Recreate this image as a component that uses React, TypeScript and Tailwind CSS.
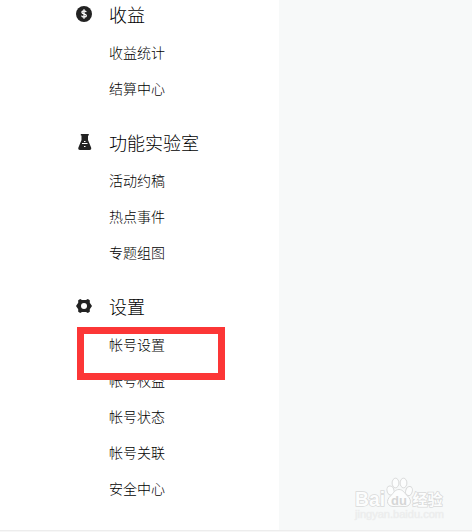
import React from 'react';

interface MenuSection {
  title: string;
  icon: React.ReactNode;
  items: string[];
}

const ACTIVE_ITEM = '帐号设置';

function IncomeIcon() {
  return (
    <svg className="w-4 h-4" viewBox="0 0 16 16" fill="none">
      <circle cx="8" cy="8" r="8" fill="#222" />
      <path
        d="M10.2 6.1C10 5.2 9.2 4.8 8 4.8S5.9 5.3 5.9 6.3c0 2.2 4.4 1.1 4.4 3.3 0 1-.9 1.6-2.3 1.6s-2.2-.6-2.4-1.6M8 3.2v9.6"
        stroke="#fff"
        strokeWidth="1.3"
      />
    </svg>
  );
}

function LabIcon() {
  return (
    <svg className="w-4 h-4" viewBox="0 0 16 16">
      <path
        d="M4.8 0h8v1.5h-.8V6l3 7.2c.7 1.5 0 2.8-1.5 2.8H4c-1.5 0-2.2-1.3-1.5-2.8L5.500 6V1.500h-.7z"
        fill="#222"
      />
      <path d="M6 9.5h5.5M8 7.5h1.5M8 12.5h1.5" stroke="#fff" strokeWidth="1" />
    </svg>
  );
}

function SettingsIcon() {
  return (
    <svg className="w-4 h-4" viewBox="0 0 16 16">
      <path
        d="M4.2 1 6 2h4l1.8-1 2 1.2v2.6L16 8l-2.2 3.2v2.6l-2 1.2L10 14H6l-1.8 1-2-1.2v-2.6L0 8l2.2-3.2V2.2z"
        fill="#222"
      />
      <circle cx="8" cy="8" r="3" fill="#fff" />
    </svg>
  );
}

const sections: MenuSection[] = [
  { title: '收益', icon: <IncomeIcon />, items: ['收益统计', '结算中心'] },
  { title: '功能实验室', icon: <LabIcon />, items: ['活动约稿', '热点事件', '专题组图'] },
  {
    title: '设置',
    icon: <SettingsIcon />,
    items: ['帐号设置', '帐号权益', '帐号状态', '帐号关联', '安全中心'],
  },
];

function Watermark() {
  return (
    <svg
      className="absolute left-[350px] top-[474px] w-[100px] h-[50px] font-['Liberation_Sans','Noto_Sans_CJK_SC',sans-serif]"
      viewBox="0 0 100 50"
      fill="#fcfdfd"
      stroke="#d9dada"
      strokeWidth="1"
    >
      <g paintOrder="stroke" strokeWidth="1.5">
        <text x="5" y="32" fontSize="19.5" fontWeight="700" textLength="30" lengthAdjust="spacingAndGlyphs">Bai</text>
        <text x="62.5" y="31" fontSize="15" fontWeight="700" textLength="30">经验</text>
      </g>
      <ellipse cx="40.5" cy="16.5" rx="3.5" ry="4.6" transform="rotate(-15 40.5 16.5)" />
      <ellipse cx="45.5" cy="9" rx="3.4" ry="4.8" />
      <ellipse cx="53.5" cy="9" rx="3.4" ry="4.8" />
      <ellipse cx="59" cy="17" rx="3.3" ry="4.6" transform="rotate(15 59 17)" />
      <path d="M49 15.5c4 0 5.5 3.5 8 6 6.5 5.5 3 11.5-3 11-3-.3-7-.3-10 0-6 .5-9.5-5.5-3-11 2.5-2.500 4-6 8-6z" />
      <text x="41" y="31" fontSize="13" fontWeight="700" textLength="16" fill="#d5d6d6" stroke="none">du</text>
      <text
        x="5"
        y="43.5"
        fontSize="11"
        textLength="89"
        lengthAdjust="spacingAndGlyphs"
        fill="#e9eaea"
        stroke="#eeefef"
        strokeWidth=".5"
      >
        jingyan.baidu.com
      </text>
    </svg>
  );
}

export default function App() {
  return (
    <div className="relative w-[472px] h-[532px] overflow-hidden flex flex-col bg-[#f7f9f9] text-black font-['Noto_Sans_CJK_SC',sans-serif]">
      <div className="flex-1 min-h-0 flex">
        <nav className="w-[279px] bg-white pl-[76px] overflow-hidden">
          <div className="-mt-[21px]">
            {sections.map((section) => (
              <section key={section.title} className="pt-4">
                <h2 className="h-10 flex items-center text-lg font-light">
                  <span className="w-[33px] -mt-0.5">{section.icon}</span>
                  <span className="pb-0.5">{section.title}</span>
                </h2>
                <ul className="pl-[33px] text-sm font-light">
                  {section.items.map((item) => (
                    <li key={item} className="relative h-9 pb-0.5 flex items-center">
                      {item}
                      {item === ACTIVE_ITEM && (
                        <span className="absolute z-10 -left-8 top-0 w-[148px] h-[53px] border-[7px] border-[#fc3636]" />
                      )}
                    </li>
                  ))}
                </ul>
              </section>
            ))}
          </div>
        </nav>
      </div>
      <div className="h-0.5 shrink-0 bg-[#f7f7f7] border-t border-[#ededed]" />
      <Watermark />
    </div>
  );
}
